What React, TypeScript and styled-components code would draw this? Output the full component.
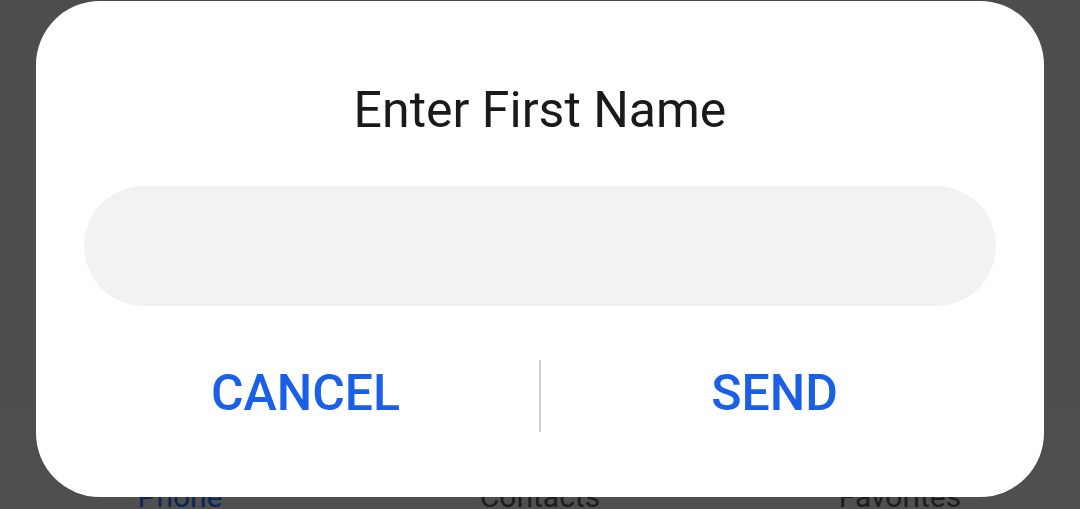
import React from "react";
import styled, { createGlobalStyle } from "styled-components";

const GlobalStyle = createGlobalStyle`
  html, body {
    margin: 0;
    padding: 0;
    background: #4e4e4e;
    overflow: hidden;
  }
  * { box-sizing: border-box; }
`;

const Page = styled.div`
  position: relative;
  width: 1080px;
  height: 509px;
  display: flex;
  flex-direction: column;
  font-family: Roboto, "Noto Sans", sans-serif;
  overflow: hidden;
  background: #4d4d4d;
`;

const Content = styled.div`
  flex: 1;
`;

const TabBar = styled.nav`
  height: 100px;
  display: grid;
  grid-template-columns: repeat(3, 1fr);
  background: #4f4f4f;
  padding-top: 73px;
`;

const TabLabel = styled.span<{ $active?: boolean }>`
  text-align: center;
  font-size: 30px;
  line-height: 30px;
  color: ${(p) => (p.$active ? "#0b2456" : "#1c1c1c")};
`;

const Dialog = styled.div`
  position: absolute;
  left: 36px;
  top: 1px;
  width: 1008px;
  height: 496px;
  background: #ffffff;
  border-radius: 64px;
  display: flex;
  flex-direction: column;
  align-items: stretch;
  padding-top: 79px;
`;

const Title = styled.h2`
  margin: 0;
  text-align: center;
  font-weight: 400;
  font-size: 50px;
  line-height: 60px;
  color: #1a1a1a;
`;

const Input = styled.input`
  margin: 46px 48px 0;
  height: 120px;
  border: none;
  outline: none;
  border-radius: 60px;
  background: #f2f2f2;
  padding: 0 48px;
  font-family: inherit;
  font-size: 40px;
  color: #1a1a1a;
`;

const ButtonRow = styled.div`
  margin: 54px 36px 0;
  display: flex;
  align-items: flex-start;
`;

const ActionButton = styled.button`
  flex: 1;
  height: 66px;
  border: none;
  background: transparent;
  padding: 0;
  font-family: inherit;
  font-size: 50px;
  font-weight: 500;
  line-height: 66px;
  color: #1a5fe6;
  cursor: pointer;
`;

const Divider = styled.div`
  width: 2px;
  height: 72px;
  background: #d0d0d0;
`;

export default function App() {
  return (
    <Page>
      <GlobalStyle />
      <Content />
      <TabBar>
        <TabLabel $active>Phone</TabLabel>
        <TabLabel>Contacts</TabLabel>
        <TabLabel>Favorites</TabLabel>
      </TabBar>
      <Dialog>
        <Title>Enter First Name</Title>
        <Input type="text" aria-label="First name" />
        <ButtonRow>
          <ActionButton>CANCEL</ActionButton>
          <Divider />
          <ActionButton>SEND</ActionButton>
        </ButtonRow>
      </Dialog>
    </Page>
  );
}
